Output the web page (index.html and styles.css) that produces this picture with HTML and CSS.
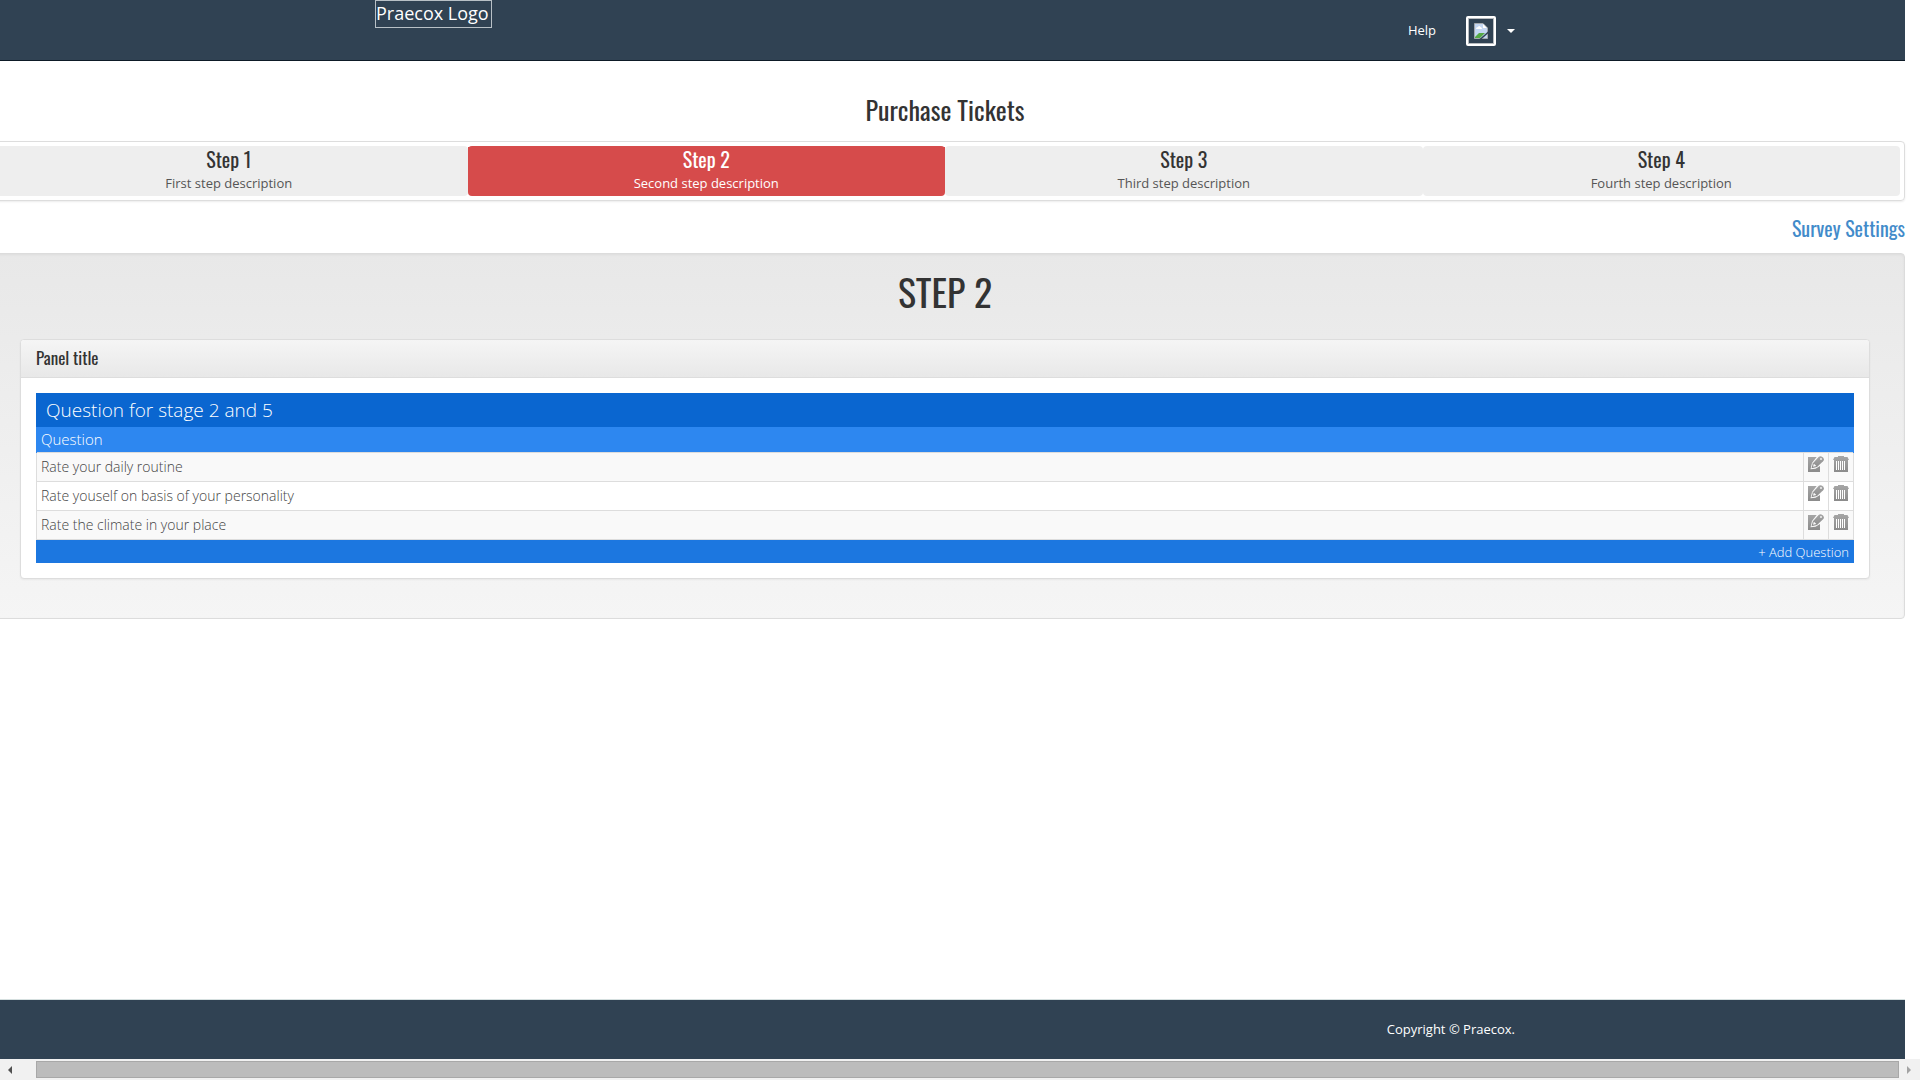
FILE: index.html
```html
<!DOCTYPE html>
<html lang="en">
<head>
<meta charset="utf-8">
<title>Purchase Tickets</title>
<link rel="stylesheet" href="styles.css">
</head>
<body>
<svg class="sprite" aria-hidden="true">
  <linearGradient id="grey" x1="0" y1="0" x2="0" y2="1"><stop offset="0" stop-color="#a6a6a6"/><stop offset="1" stop-color="#8b8b8b"/></linearGradient>
  <symbol id="edit" viewBox="0 0 16 16">
    <path fill="url(#grey)" d="M0 1h12v15H0z"/>
    <path fill="#fafafa" d="M2.500 13.200L4 7 9.500 0H16v5l-4 5-4.500 2.700z"/>
    <path fill="url(#grey)" d="M3.500 12.200L4.900 7.300 10.600.9Q12-.2 13.500.4q2 .8 2.400 2.600.2 1.200-.8 2.300L9 11z"/>
    <path fill="#fafafa" d="M5 10.700l.9-3L8.400 10z"/>
    <circle cx="13" cy="3" r=".9" fill="#fafafa"/>
  </symbol>
  <symbol id="trash" viewBox="0 0 16 16">
    <path fill="url(#grey)" d="M5 0h6v1h3.500L16 4h-1v12H1V4H0l1.500-3H5z"/>
    <path stroke="#fff" stroke-width="1" d="M3.500 5v9M5.500 5v9M7.500 5v9M9.500 5v9M11.500 5v9"/>
  </symbol>
</svg>
<div class="page">
  <header class="topbar">
    <div class="container">
      <a class="logo" href="#">Praecox Logo</a>
      <nav class="nav">
        <a href="#">Help</a>
        <button class="account" type="button" aria-label="Account menu">
          <span class="avatar">
            <svg width="14" height="16" viewBox="0 0 14 16" aria-hidden="true">
              <path fill="#c3d6f2" stroke="#a4a9ad" d="M.5.500h8.500l4.500 4.500v10.500H.5z"/>
              <path fill="#fff" d="M2 6q0-2 2-2 1-2 2.500 0Q8 4.500 8 6zM9 1v4h4z"/>
              <path fill="#55a945" d="M1 15v-1l4-4h6l-5 5z"/>
              <path stroke="#304253" stroke-width="1.500" d="M6 16.500l8.500-7.500"/>
            </svg>
          </span>
          <span class="caret"></span>
        </button>
      </nav>
    </div>
  </header>
  <main>
    <h1 class="page-title">Purchase Tickets</h1>
    <ul class="steps">
      <li><a href="#"><strong>Step 1</strong><span>First step description</span></a></li>
      <li><a class="active" href="#"><strong>Step 2</strong><span>Second step description</span></a></li>
      <li><a href="#"><strong>Step 3</strong><span>Third step description</span></a></li>
      <li><a href="#"><strong>Step 4</strong><span>Fourth step description</span></a></li>
    </ul>
    <a class="settings" href="#">Survey Settings</a>
    <section class="well">
      <h2 class="step-title">STEP 2</h2>
      <div class="panel">
        <h3 class="panel-title">Panel title</h3>
        <div class="panel-body">
          <table class="questions">
            <caption>Question for stage 2 and 5</caption>
            <thead><tr><th colspan="3">Question</th></tr></thead>
            <tbody>
              <tr><td>Rate your daily routine</td><td class="tool"><button type="button" aria-label="Edit"><svg><use href="#edit"/></svg></button></td><td class="tool"><button type="button" aria-label="Delete"><svg><use href="#trash"/></svg></button></td></tr>
              <tr><td>Rate youself on basis of your personality</td><td class="tool"><button type="button" aria-label="Edit"><svg><use href="#edit"/></svg></button></td><td class="tool"><button type="button" aria-label="Delete"><svg><use href="#trash"/></svg></button></td></tr>
              <tr><td>Rate the climate in your place</td><td class="tool"><button type="button" aria-label="Edit"><svg><use href="#edit"/></svg></button></td><td class="tool"><button type="button" aria-label="Delete"><svg><use href="#trash"/></svg></button></td></tr>
            </tbody>
            <tfoot><tr><td colspan="3"><a href="#">+ Add Question</a></td></tr></tfoot>
          </table>
        </div>
      </div>
    </section>
  </main>
  <footer class="footer">
    <div class="container"><p>Copyright © Praecox.</p></div>
  </footer>
</div>
<div class="scrollbar" aria-hidden="true">
  <span class="arrow arrow-left"></span>
  <span class="thumb"></span>
  <span class="arrow arrow-right"></span>
</div>
</body>
</html>
```
FILE: styles.css
```css
* { box-sizing: border-box; }

body {
  margin: 0;
  min-height: 100vh;
  display: flex;
  flex-direction: column;
  overflow: hidden;
  background: #fff;
  color: #333;
  font: 13px/20px "Open Sans", sans-serif;
}

h1, h2, h3, p, ul { margin: 0; padding: 0; }
a { color: inherit; text-decoration: none; }
button { padding: 0; border: 0; background: none; color: inherit; font: inherit; cursor: pointer; }
.sprite { position: absolute; width: 0; height: 0; }

.page {
  flex: 1;
  display: flex;
  flex-direction: column;
  margin: 0 15px 0 -15px;
}

.container {
  max-width: 1140px;
  margin: 0 auto;
  display: flex;
  justify-content: space-between;
}

.topbar {
  height: 61px;
  background: #304253;
  border-bottom: 1px solid #0d1a26;
  color: #fff;
}
.topbar .container { height: 60px; }
.logo {
  align-self: flex-start;
  height: 28px;
  padding: 0 2px 0 0;
  border: 1px solid #b8c0c6;
  font-size: 18px;
  line-height: 24px;
}
.nav { display: flex; align-items: center; gap: 30px; }
.account { display: flex; align-items: center; gap: 11px; padding-top: 2px; }
.avatar {
  width: 30px;
  height: 30px;
  display: flex;
  align-items: center;
  justify-content: center;
  border: 2px solid #fff;
  border-radius: 2px;
  box-shadow: inset 0 0 0 1px #b8bcc0;
}
.caret { border: 4px solid transparent; border-top-color: #fff; border-bottom: 0; }

.page-title, .steps strong, .settings, .step-title, .panel-title {
  font-family: Oswald, "Roboto Condensed", "Liberation Sans Narrow", sans-serif;
  font-weight: 400;
}
.page-title {
  margin: 29px 0 11px;
  font-size: 26px;
  line-height: 40px;
  text-align: center;
}

.steps {
  display: flex;
  padding: 4px;
  border: 1px solid #ddd;
  border-radius: 4px;
  box-shadow: 0 1px 2px rgba(0, 0, 0, .08);
  list-style: none;
}
.steps li { flex: 1; }
.steps a {
  display: block;
  height: 50px;
  padding-top: 1px;
  border-radius: 4px;
  background: #eee;
  color: #555;
  text-align: center;
}
.steps strong { display: block; padding-bottom: 2px; color: #333; font-size: 20px; line-height: 24px; }
.steps span { display: block; }
.steps .active, .steps .active strong { background: #d64b4b; color: #fff; }

.settings {
  display: block;
  width: fit-content;
  margin: 15px 0 12px auto;
  color: #428bca;
  font-size: 20px;
  line-height: 25px;
}

.well {
  padding: 17px 34px 39px;
  border: 1px solid #dcdcdc;
  border-radius: 4px;
  background: linear-gradient(#e8e8e8, #f5f5f5);
  box-shadow: inset 0 1px 3px rgba(0, 0, 0, .05);
}
.step-title { margin-bottom: 28px; font-size: 38px; line-height: 40px; text-align: center; }

.panel {
  border: 1px solid #ddd;
  border-radius: 4px;
  background: #fff;
  box-shadow: 0 1px 2px rgba(0, 0, 0, .05);
}
.panel-title {
  padding: 7px 15px 9px;
  border-bottom: 1px solid #ddd;
  border-radius: 3px 3px 0 0;
  background: linear-gradient(#f5f5f5, #e8e8e8);
  font-size: 17px;
  line-height: 21px;
}
.panel-body { padding: 15px; }

.questions { width: 100%; border-collapse: collapse; font-weight: 300; }
.questions caption {
  padding: 2px 10px;
  background: #0a66d0;
  color: #fff;
  font-size: 19px;
  line-height: 30px;
  text-align: left;
}
.questions th {
  height: 25px;
  padding: 0 4px;
  border: solid #2d87f0;
  border-width: 0 1px;
  background: #2d87f0;
  color: #fff;
  font-size: 15px;
  font-weight: 300;
  line-height: 25px;
  text-align: left;
}
.questions tbody td {
  height: 29px;
  padding: 0 4px;
  border: 1px solid #ddd;
  color: #444;
  font-size: 14px;
}
.questions tbody tr:nth-child(odd) { background: #f9f9f9; }
.questions tbody .tool { width: 25px; line-height: 0; }
.tool button { display: flex; width: 16px; height: 24px; align-items: flex-start; padding-top: 1px; }
.tool svg { display: block; width: 16px; height: 16px; }
.questions tfoot td {
  height: 23px;
  padding: 1px 4px 0;
  border: solid #1c77e0;
  border-width: 0 1px;
  background: #1c77e0;
  color: #fff;
  text-align: right;
}

.footer {
  margin-top: auto;
  padding: 19px 0 20px;
  border-top: 1px solid #d5dfdf;
  background: #304253;
  color: #fff;
}
.footer .container { justify-content: flex-end; }

.scrollbar {
  height: 21px;
  display: flex;
  align-items: center;
  padding: 2px 9px 2px 8px;
  background: #f1f1f1;
}
.thumb {
  flex: 1;
  height: 17px;
  margin: 0 8px 0 24px;
  border: 1px solid #a8a8a8;
  background: #bcbcbc;
}
.arrow { border: 4px solid transparent; }
.arrow-left { border-left: 0; border-right-color: #505050; }
.arrow-right { border-right: 0; border-left-color: #a3a3a3; }
```
